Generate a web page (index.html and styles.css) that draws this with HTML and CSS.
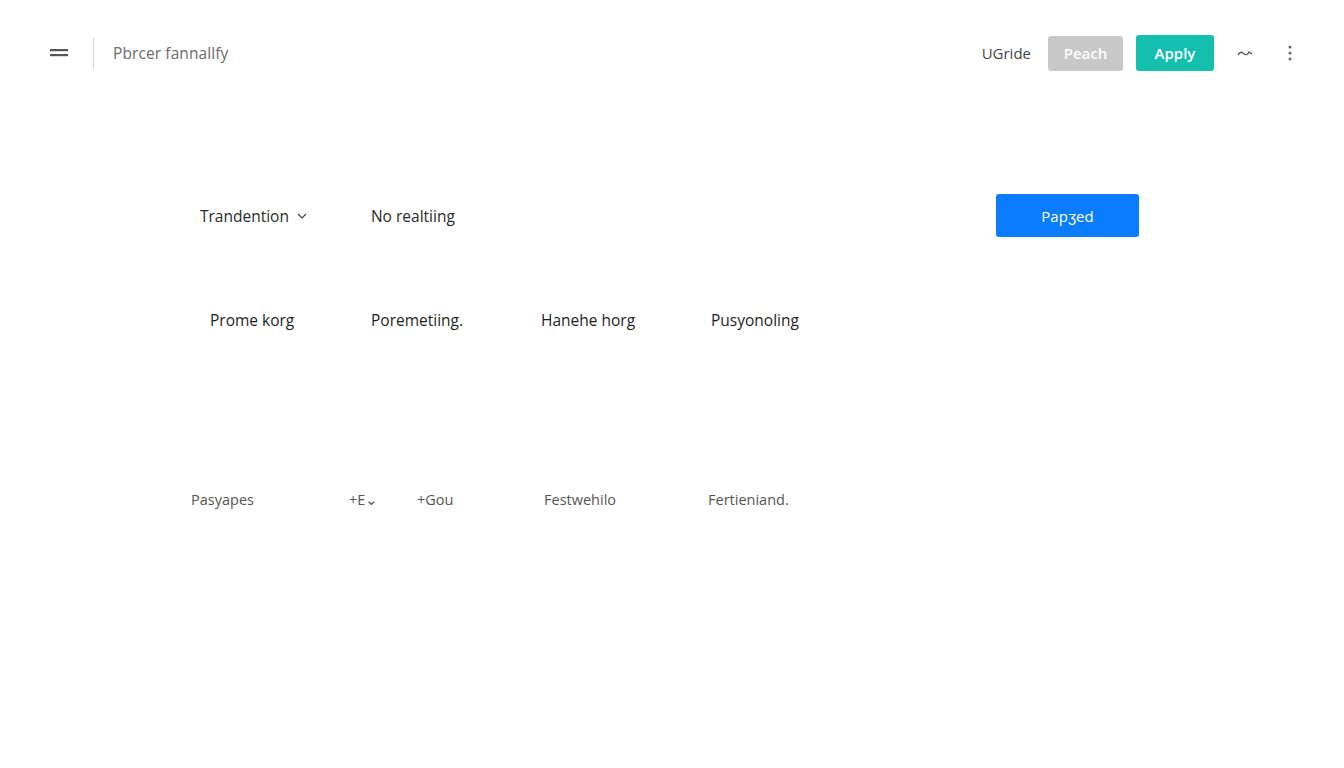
FILE: index.html
```html
<!DOCTYPE html>
<html>
<head>
<meta charset="utf-8">
<link rel="stylesheet" href="styles.css">
</head>
<body>
<header class="topbar">
  <div class="left">
    <button class="menu-btn" aria-label="menu">
      <svg width="18" height="10" viewBox="0 0 18 10"><rect x="0" y="1" width="18" height="2.2" fill="#555"/><rect x="0" y="6" width="18" height="2.2" fill="#555"/></svg>
    </button>
    <span class="divider"></span>
    <span class="title">Pbrcer fannallfy</span>
  </div>
  <div class="right">
    <span class="guide">UGride</span>
    <button class="btn btn-gray">Peach</button>
    <button class="btn btn-teal">Apply</button>
    <span class="wave">
      <svg width="16" height="8" viewBox="0 0 16 8"><path d="M1 6 Q4 1 7 5 Q10 7 12 3 L15 5" fill="none" stroke="#555" stroke-width="1.4"/></svg>
    </span>
    <span class="kebab">
      <svg width="4" height="16" viewBox="0 0 4 16"><circle cx="2" cy="2" r="1.5" fill="#666"/><circle cx="2" cy="8" r="1.5" fill="#666"/><circle cx="2" cy="14" r="1.5" fill="#666"/></svg>
    </span>
  </div>
</header>
<main class="content">
  <section class="row row-filter">
    <div class="filters">
      <span class="dropdown">Trandention
        <svg width="10" height="6" viewBox="0 0 10 6"><path d="M1 1 L5 5 L9 1" fill="none" stroke="#444" stroke-width="1.2"/></svg>
      </span>
      <span class="filter">No realtiing</span>
    </div>
    <button class="btn btn-blue">Papʒed</button>
  </section>
  <section class="row row-tabs">
    <span class="tab t1">Prome korg</span>
    <span class="tab t2">Poremetiing.</span>
    <span class="tab t3">Hanehe horg</span>
    <span class="tab t4">Pusyonoling</span>
  </section>
  <section class="row row-meta">
    <span class="meta m1">Pasyapes</span>
    <span class="meta m2">+E⌄</span>
    <span class="meta m3">+Gou</span>
    <span class="meta m4">Festwehilo</span>
    <span class="meta m5">Fertieniand.</span>
  </section>
</main>
</body>
</html>
```
FILE: styles.css
```css
* { box-sizing: border-box; }
html, body { margin: 0; padding: 0; background: #fff; }
body {
  width: 1344px;
  height: 768px;
  font-family: "Open Sans", "Liberation Sans", sans-serif;
  color: #222;
  overflow: hidden;
}
.topbar {
  height: 106px;
  display: flex;
  align-items: center;
  justify-content: space-between;
  padding: 0 52px 0 50px;
}
.left, .right { display: flex; align-items: center; }
.menu-btn {
  border: 0; background: none; padding: 0;
  width: 18px; height: 10px;
  display: flex;
}
.divider {
  width: 1px; height: 31px; background: #d4d4d4;
  margin-left: 25px;
}
.title {
  margin-left: 19px;
  font-size: 15.5px;
  color: #6b6b6b;
  letter-spacing: 0.1px;
}
.guide {
  font-size: 15px;
  color: #444;
  margin-right: 17px;
}
.btn {
  border: 0;
  font-family: "Open Sans", "Liberation Sans", sans-serif;
  color: #fff;
  border-radius: 3px;
  font-size: 15px;
  font-weight: 600;
  cursor: pointer;
}
.btn-gray {
  background: #c8c8c8;
  width: 75px; height: 35px;
  margin-right: 13px;
}
.btn-teal {
  background: #14bfae;
  width: 78px; height: 36px;
  margin-right: 23px;
}
.wave { display: flex; margin-right: 35px; }
.kebab { display: flex; }

.content { padding: 0; }
.row { display: flex; align-items: center; }
.row-filter {
  margin-top: 88px;
  padding-left: 200px;
  padding-right: 205px;
  justify-content: space-between;
  height: 43px;
}
.filters { display: flex; align-items: center; }
.dropdown {
  font-size: 15.5px;
  color: #2a2a2a;
  display: flex; align-items: center; gap: 8px;
}
.filter {
  margin-left: 64px;
  font-size: 15.5px;
  color: #2a2a2a;
}
.btn-blue {
  background: #0a7cff;
  width: 143px; height: 43px;
  font-size: 15px;
  font-weight: 500;
}
.row-tabs {
  margin-top: 71px;
  padding-left: 210px;
  height: 24px;
}
.tab { font-size: 15.5px; color: #1e1e1e; }
.t1 { width: 161px; }
.t2 { width: 170px; }
.t3 { width: 170px; }
.row-meta {
  margin-top: 155px;
  padding-left: 191px;
  height: 24px;
}
.meta { font-size: 14.5px; color: #555; }
.m1 { width: 158px; }
.m2 { width: 68px; }
.m3 { width: 127px; }
.m4 { width: 164px; }
```
